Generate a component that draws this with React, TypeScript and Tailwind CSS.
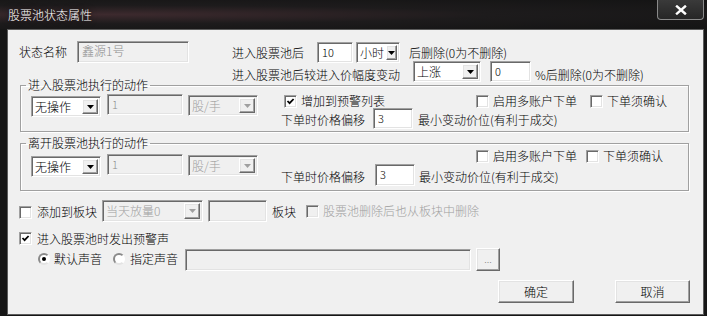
import React from 'react'

const sunken =
  'border border-t-[#a0a0a0] border-l-[#a0a0a0] border-r-white border-b-white shadow-[inset_1px_1px_0_#696969,inset_-1px_-1px_0_#e3e3e3]'
const raised =
  'border border-t-white border-l-white border-r-[#696969] border-b-[#696969] shadow-[inset_-1px_-1px_0_#a0a0a0,inset_1px_1px_0_#e3e3e3]'

type BoxProps = { className?: string; text?: string; disabled?: boolean }

function Edit({ className = '', text = '', disabled }: BoxProps) {
  return (
    <div
      className={`${sunken} ${disabled ? 'bg-[#f0f0f0] text-[#8c8c8c]' : 'bg-white text-black'} pl-[4px] pt-[2px] leading-[14px] ${className}`}
    >
      {text}
    </div>
  )
}

function Arrow({ disabled }: { disabled?: boolean }) {
  return (
    <svg width="7" height="4" viewBox="0 0 7 4">
      <polygon points="0,0 7,0 3.5,4" fill={disabled ? '#a0a0a0' : '#000'} />
    </svg>
  )
}

function Combo({ className = '', text = '', disabled }: BoxProps) {
  return (
    <div
      className={`${sunken} flex items-stretch ${disabled ? 'bg-[#f0f0f0] text-[#a0a0a0]' : 'bg-white text-black'} ${className}`}
    >
      <span className="flex-1 flex items-center pl-[3px] leading-[14px] whitespace-nowrap">{text}</span>
      <span className={`${raised} w-[16px] m-[2px] flex items-center justify-center bg-[#f0f0f0]`}>
        <Arrow disabled={disabled} />
      </span>
    </div>
  )
}

function Check({ checked, disabled, className = '' }: { checked?: boolean; disabled?: boolean; className?: string }) {
  return (
    <span
      className={`${sunken} w-[13px] h-[13px] shrink-0 flex items-center justify-center ${disabled ? 'bg-[#f0f0f0]' : 'bg-white'} ${className}`}
    >
      {checked && (
        <svg width="9" height="9" viewBox="0 0 9 9">
          <polyline points="1.5,4 3.6,6.2 7.6,2" fill="none" stroke="#000" strokeWidth="1.8" />
        </svg>
      )}
    </span>
  )
}

function Radio({ checked, className = '' }: { checked?: boolean; className?: string }) {
  return (
    <span
      className={`w-[12px] h-[12px] shrink-0 rounded-full border-2 border-t-[#8a8a8a] border-l-[#8a8a8a] border-r-white border-b-[#e3e3e3] bg-white flex items-center justify-center ${className}`}
    >
      {checked && <span className="w-[4px] h-[4px] rounded-full bg-black" />}
    </span>
  )
}

function Button({ className = '', children }: { className?: string; children: React.ReactNode }) {
  return (
    <div className={`${raised} bg-[#f0f0f0] flex items-center justify-center leading-[14px] ${className}`}>
      {children}
    </div>
  )
}

function Label({ className = '', children }: { className?: string; children: React.ReactNode }) {
  return <span className={`leading-[14px] whitespace-nowrap ${className}`}>{children}</span>
}

export default function App() {
  return (
    <div className="w-[707px] h-[316px] overflow-hidden bg-[#161616] flex flex-col font-['Noto_Sans_CJK_SC','Liberation_Sans',sans-serif] font-light text-[12px] text-black">
      {/* title bar */}
      <div className="h-[29px] flex items-start bg-[radial-gradient(ellipse_at_15%_50%,#3d2a2e_0%,#1d1b1c_45%,#141414_100%)]">
        <span className="ml-[8px] mt-[8px] text-white leading-[14px] [text-shadow:0_0_6px_#000]">股票池状态属性</span>
        <div className="ml-auto mr-[3px] w-[47px] h-[20px] rounded-b-[4px] border border-t-0 border-[#8a8a8a] bg-gradient-to-b from-[#3a3a3a] to-[#262626] flex items-center justify-center">
          <svg width="12" height="10" viewBox="0 0 12 10">
            <path d="M2 1.5 L10 8.5 M10 1.5 L2 8.5" stroke="#fff" strokeWidth="2.4" strokeLinecap="square" />
          </svg>
        </div>
      </div>

      {/* client area */}
      <div className="ml-[7px] w-[697px] h-[286px] border border-[#5c5c5c] bg-[#f0f0f0] flex flex-col">
        {/* top rows */}
        <div className="h-[48px] pt-[11px] pl-[11px] flex items-start">
          <div className="flex items-center h-[22px]">
            <Label>状态名称</Label>
            <Edit disabled className="ml-[10px] w-[112px] h-[22px]" text="鑫源1号" />
          </div>
          <div className="ml-[43px] flex flex-col">
            <div className="mt-[1px] flex items-center h-[21px]">
              <Label>进入股票池后</Label>
              <Edit className="ml-[13px] w-[36px] h-[21px] text-[11px]" text="10" />
              <Combo className="ml-[3px] w-[44px] h-[21px]" text="小时" />
              <Label className="ml-[9px]">后删除(0为不删除)</Label>
            </div>
            <div className="mt-[-2px] flex items-start">
              <Label className="mt-[7px]">进入股票池后较进入价幅度变动</Label>
              <Combo className="ml-[13px] w-[68px] h-[21px]" text="上涨" />
              <Edit className="ml-[9px] w-[41px] h-[21px] text-[11px]" text="0" />
              <Label className="ml-[4px] mt-[7px]">%后删除(0为不删除)</Label>
            </div>
          </div>
        </div>

        {/* group 1 */}
        <fieldset className="ml-[12px] w-[669px] h-[54px] border border-[#a0a0a0] shadow-[inset_1px_1px_0_#fff,1px_1px_0_#fff]">
          <legend className="ml-[5px] px-[2px] leading-[14px]">进入股票池执行的动作</legend>
          <div className="flex items-start">
            <Combo className="ml-[10px] mt-[4px] w-[70px] h-[21px]" text="无操作" />
            <Edit disabled className="ml-[6px] mt-[2px] w-[76px] h-[21px] text-[11px]" text="1" />
            <Combo disabled className="ml-[5px] mt-[3px] w-[70px] h-[21px]" text="股/手" />
            <div className="ml-[22px] flex flex-col">
              <div className="mt-[2px] h-[14px] flex items-center">
                <Check checked className="ml-[4px]" />
                <Label className="ml-[4px]">增加到预警列表</Label>
                <Check className="ml-[91px]" />
                <Label className="ml-[4px]">启用多账户下单</Label>
                <Check className="ml-[13px]" />
                <Label className="ml-[4px]">下单须确认</Label>
              </div>
              <div className="flex items-start">
                <Label className="ml-[1px] mt-[5px]">下单时价格偏移</Label>
                <Edit className="ml-[8px] w-[40px] h-[21px] text-[11px]" text="3" />
                <Label className="ml-[5px] mt-[5px]">最小变动价位(有利于成交)</Label>
              </div>
            </div>
          </div>
        </fieldset>

        {/* group 2 */}
        <fieldset className="mt-[4px] ml-[12px] w-[669px] h-[55px] border border-[#a0a0a0] shadow-[inset_1px_1px_0_#fff,1px_1px_0_#fff]">
          <legend className="ml-[5px] px-[2px] leading-[14px]">离开股票池执行的动作</legend>
          <div className="flex items-start">
            <Combo className="ml-[10px] mt-[6px] w-[70px] h-[21px]" text="无操作" />
            <Edit disabled className="ml-[6px] mt-[4px] w-[76px] h-[21px] text-[11px]" text="1" />
            <Combo disabled className="ml-[5px] mt-[5px] w-[70px] h-[21px]" text="股/手" />
            <div className="ml-[22px] flex flex-col">
              <div className="mt-[-1px] h-[14px] flex items-center">
                <Check className="ml-[196px]" />
                <Label className="ml-[4px]">启用多账户下单</Label>
                <Check className="ml-[9px]" />
                <Label className="ml-[4px]">下单须确认</Label>
              </div>
              <div className="mt-[1px] flex items-start">
                <Label className="ml-[1px] mt-[6px]">下单时价格偏移</Label>
                <Edit className="ml-[10px] w-[40px] h-[22px] text-[11px]" text="3" />
                <Label className="ml-[4px] mt-[6px]">最小变动价位(有利于成交)</Label>
              </div>
            </div>
          </div>
        </fieldset>

        {/* block row */}
        <div className="mt-[9px] pl-[11px] h-[22px] flex items-center">
          <Check className="mt-[2px]" />
          <Label className="ml-[5px] mt-[2px]">添加到板块</Label>
          <Combo disabled className="ml-[5px] w-[101px] h-[22px]" text="当天放量0" />
          <Edit disabled className="ml-[5px] w-[59px] h-[22px]" />
          <Label className="ml-[5px] mt-[2px]">板块</Label>
          <Check disabled className="ml-[10px]" />
          <Label className="ml-[4px] text-[#a0a0a0]">股票池删除后也从板块中删除</Label>
        </div>

        <div className="mt-[10px] pl-[11px] h-[13px] flex items-center">
          <Check checked />
          <Label className="ml-[5px]">进入股票池时发出预警声</Label>
        </div>

        <div className="mt-[2px] pl-[30px] h-[24px] flex items-center">
          <Radio checked />
          <Label className="ml-[4px]">默认声音</Label>
          <Radio className="ml-[11px]" />
          <Label className="ml-[5px]">指定声音</Label>
          <Edit disabled className="ml-[7px] w-[286px] h-[22px] mt-[2px]" />
          <Button className="ml-[5px] w-[24px] h-[23px] text-[#808080] text-[10px]">...</Button>
        </div>

        <div className="mt-[9px] pr-[13px] flex justify-end gap-[41px]">
          <Button className="w-[76px] h-[23px]">确定</Button>
          <Button className="w-[75px] h-[23px]">取消</Button>
        </div>
      </div>
    </div>
  )
}
